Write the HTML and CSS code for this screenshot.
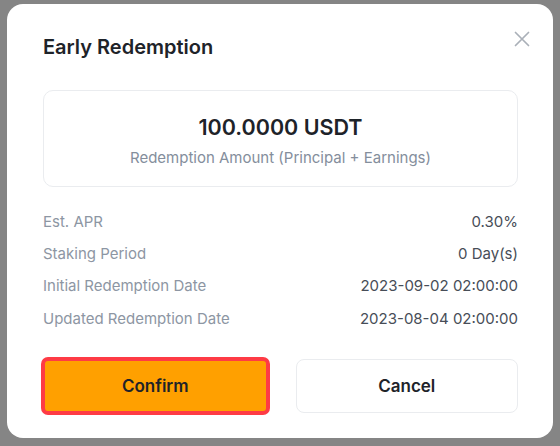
FILE: index.html
```html
<!DOCTYPE html>
<html lang="en">
<head>
<meta charset="utf-8">
<title>Early Redemption</title>
<link rel="stylesheet" href="styles.css">
</head>
<body>
<div class="modal">
  <div class="modal-head">
    <h2 class="modal-title">Early Redemption</h2>
    <button class="close" aria-label="Close">
      <svg viewBox="0 0 16 16" width="16" height="16"><path d="M1.5 1.5 L14.5 14.5 M14.5 1.5 L1.5 14.5" stroke="currentColor" stroke-width="1.7" stroke-linecap="round" fill="none"/></svg>
    </button>
  </div>
  <div class="amount-box">
    <div class="amount">100.0000 USDT</div>
    <div class="amount-label">Redemption Amount (Principal + Earnings)</div>
  </div>
  <div class="details">
    <div class="row"><span class="label">Est. APR</span><span class="value">0.30%</span></div>
    <div class="row"><span class="label">Staking Period</span><span class="value">0 Day(s)</span></div>
    <div class="row"><span class="label">Initial Redemption Date</span><span class="value">2023-09-02 02:00:00</span></div>
    <div class="row"><span class="label">Updated Redemption Date</span><span class="value">2023-08-04 02:00:00</span></div>
  </div>
  <div class="actions">
    <button class="btn btn-primary">Confirm</button>
    <button class="btn btn-secondary">Cancel</button>
  </div>
</div>
</body>
</html>
```
FILE: styles.css
```css
html, body {
  margin: 0;
  background: #858585;
}
body {
  padding: 4px 7px;
  font-family: Inter, "Noto Sans", sans-serif;
}
.modal {
  width: 546px;
  box-sizing: border-box;
  background: #fff;
  border-radius: 16px;
  padding: 28px 35px 25px 36px;
}
.modal-head {
  display: flex;
  justify-content: space-between;
  align-items: flex-start;
}
.modal-title {
  margin: 0;
  font-size: 20px;
  line-height: 30px;
  font-weight: 600;
  color: #1e2329;
}
.close {
  border: 0;
  background: none;
  padding: 0;
  margin: -1px -12px 0 0;
  width: 16px;
  height: 16px;
  color: #aab0b8;
  display: flex;
}
.amount-box {
  margin-top: 28px;
  border: 1px solid #eaecef;
  border-radius: 10px;
  padding: 21px 0 17px;
  text-align: center;
}
.amount {
  font-size: 21.5px;
  line-height: 30px;
  font-weight: 600;
  color: #1e2329;
}
.amount-label {
  margin-top: 5px;
  font-size: 15px;
  line-height: 22px;
  color: #848e9c;
}
.details {
  margin-top: 24px;
  display: flex;
  flex-direction: column;
  gap: 10.2px;
}
.row {
  display: flex;
  justify-content: space-between;
  font-size: 15px;
  line-height: 22px;
}
.label { color: #8d96a3; }
.value { color: #474d57; }
.actions {
  margin-top: 29px;
  display: flex;
  gap: 28px;
}
.btn {
  flex: 1;
  height: 54px;
  border-radius: 8px;
  font-family: inherit;
  font-size: 17px;
  font-weight: 600;
  color: #1e2329;
  cursor: pointer;
}
.btn-primary {
  background: #ffa000;
  border: 2px solid #fe3b45;
  box-shadow: 0 0 0 2px #fe3b45;
  border-radius: 5px;
}
.btn-secondary {
  background: #fff;
  border: 1px solid #eaecef;
}
```
